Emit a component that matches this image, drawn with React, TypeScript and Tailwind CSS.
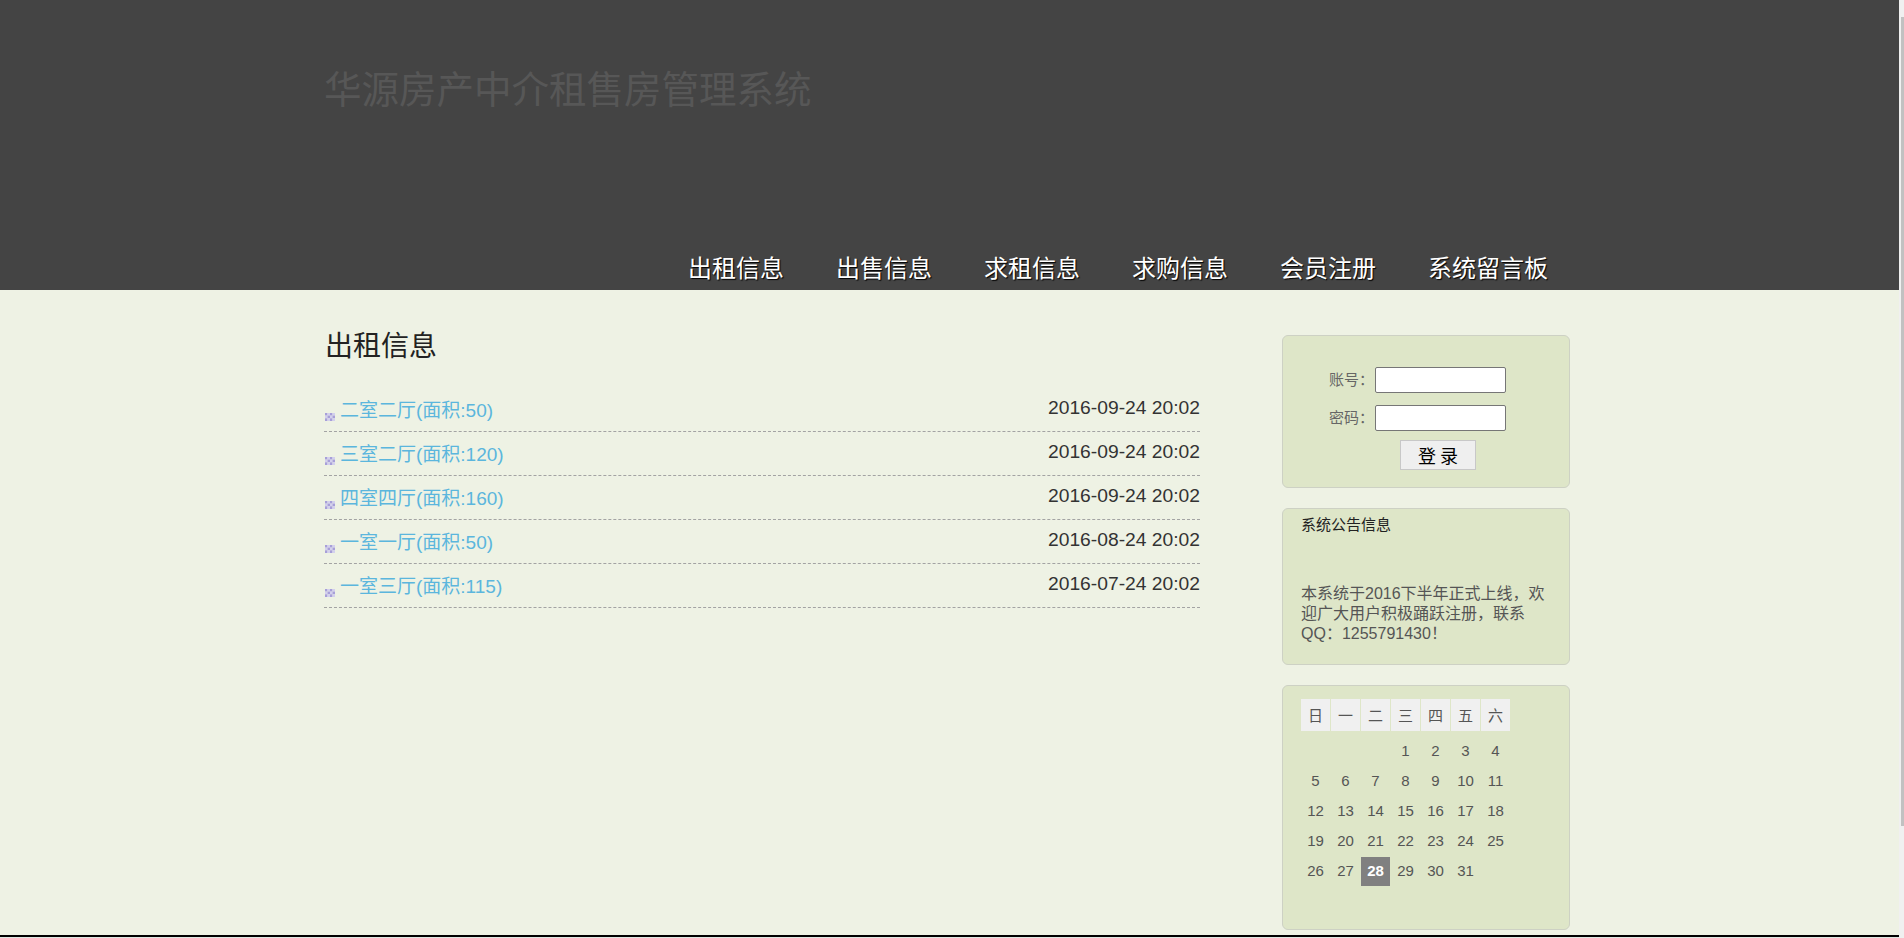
import React from "react";

const listItems = [
  { title: "二室二厅(面积:50)", date: "2016-09-24 20:02" },
  { title: "三室二厅(面积:120)", date: "2016-09-24 20:02" },
  { title: "四室四厅(面积:160)", date: "2016-09-24 20:02" },
  { title: "一室一厅(面积:50)", date: "2016-08-24 20:02" },
  { title: "一室三厅(面积:115)", date: "2016-07-24 20:02" },
];

const navItems = ["出租信息", "出售信息", "求租信息", "求购信息", "会员注册", "系统留言板"];

const weekDays = ["日", "一", "二", "三", "四", "五", "六"];

function Bullet() {
  const dark = "#a79fd9";
  const light = "#d3d0ee";
  return (
    <svg width="10" height="8" viewBox="0 0 10 8" className="mt-[25px] ml-[1px] shrink-0">
      <rect x="0" y="0" width="2.5" height="2.6" fill={dark} />
      <rect x="2.5" y="0" width="2.5" height="2.6" fill={light} />
      <rect x="5" y="0" width="2.5" height="2.6" fill={dark} />
      <rect x="7.5" y="0" width="2.5" height="2.6" fill={light} />
      <rect x="0" y="2.6" width="2.5" height="2.7" fill={light} />
      <rect x="2.5" y="2.6" width="2.5" height="2.7" fill={dark} />
      <rect x="5" y="2.6" width="2.5" height="2.7" fill={light} />
      <rect x="7.5" y="2.6" width="2.5" height="2.7" fill={dark} />
      <rect x="0" y="5.3" width="2.5" height="2.7" fill={dark} />
      <rect x="2.5" y="5.3" width="2.5" height="2.7" fill={light} />
      <rect x="5" y="5.3" width="2.5" height="2.7" fill={dark} />
      <rect x="7.5" y="5.3" width="2.5" height="2.7" fill={light} />
    </svg>
  );
}

function Calendar() {
  const cells: (number | null)[] = [null, null, null];
  for (let d = 1; d <= 31; d++) cells.push(d);
  return (
    <div>
      <div className="grid grid-cols-[repeat(7,29px)] gap-[1px]">
        {weekDays.map((w) => (
          <div
            key={w}
            className="h-[32px] bg-[#f0f0f0] flex items-center justify-center text-[15px] text-[#555] font-['Noto_Sans_CJK_SC',sans-serif]"
          >
            {w}
          </div>
        ))}
      </div>
      <div className="mt-[6px] grid grid-cols-[repeat(7,29px)] gap-[1px]">
        {cells.map((d, i) =>
          d === 28 ? (
            <div
              key={i}
              className="h-[29px] bg-[#808080] flex items-center justify-center text-[15px] font-bold text-white"
            >
              {d}
            </div>
          ) : (
            <div key={i} className="h-[29px] flex items-center justify-center text-[15px] text-[#555]">
              {d ?? ""}
            </div>
          )
        )}
      </div>
    </div>
  );
}

export default function App() {
  return (
    <div className="flex h-[938px] w-full overflow-hidden font-['Liberation_Sans','Noto_Sans_CJK_SC',sans-serif]">
      <div className="flex-1 min-w-0 flex flex-col">
        <header className="h-[290px] bg-[#444444]">
          <div className="w-[1251px] mx-auto h-full flex flex-col">
            <h1 className="pt-[68px] text-[37.5px] leading-none text-[#575757] font-['Noto_Sans_CJK_SC',sans-serif]">
              华源房产中介租售房管理系统
            </h1>
            <nav className="mt-auto pb-[11px] pr-[1px] flex justify-end">
              {navItems.map((n) => (
                <a
                  key={n}
                  className="px-[26px] text-[24px] leading-none text-white [text-shadow:1px_1px_1px_#000] font-['Noto_Sans_CJK_SC',sans-serif]"
                >
                  {n}
                </a>
              ))}
            </nav>
          </div>
        </header>

        <main className="h-[645px] bg-[#eef2e4]">
          <div className="w-[1251px] mx-auto flex">
            <section className="w-[876px] pt-[40px]">
              <h2 className="pl-[1px] text-[28px] leading-none text-[#222] font-['Noto_Sans_CJK_SC',sans-serif]">
                出租信息
              </h2>
              <ul className="mt-[30px]">
                {listItems.map((it) => (
                  <li
                    key={it.title}
                    className="h-[44px] border-b border-dashed border-[#a3a3a3] flex items-start justify-between"
                  >
                    <div className="flex items-start">
                      <Bullet />
                      <a className="ml-[5px] mt-[13px] text-[19px] leading-none text-[#5bb6dd]">{it.title}</a>
                    </div>
                    <span className="mt-[10px] text-[19.25px] leading-none text-[#333]">{it.date}</span>
                  </li>
                ))}
              </ul>
            </section>

            <aside className="ml-auto mr-[5px] w-[288px] pt-[45px] flex flex-col gap-[20px]">
              <div className="h-[153px] rounded-[6px] border border-[#cdd1c4] bg-[#dee6c8] pt-[31px] pl-[46px]">
                <div className="flex flex-col gap-[12px]">
                  <div className="flex items-center">
                    <span className="w-[46px] text-[15px] text-[#666]">账号：</span>
                    <input className="w-[131px] h-[26px] bg-white border border-[#767676] rounded-[2px]" />
                  </div>
                  <div className="flex items-center">
                    <span className="w-[46px] text-[15px] text-[#666]">密码：</span>
                    <input
                      type="password"
                      className="w-[131px] h-[26px] bg-white border border-[#767676] rounded-[2px]"
                    />
                  </div>
                </div>
                <button className="mt-[9px] ml-[71px] w-[76px] h-[30px] bg-[#efefef] border border-[#c8c8c8] text-[18px] text-black leading-none font-['Noto_Sans_CJK_SC',sans-serif]">
                  登&nbsp;录
                </button>
              </div>

              <div className="h-[157px] rounded-[6px] border border-[#cdd1c4] bg-[#dee6c8] pl-[18px] pt-[8px]">
                <div className="text-[15px] leading-none text-[#222]">系统公告信息</div>
                <p className="mt-[52px] w-[247px] text-[16px] leading-[20px] text-[#555]">
                  本系统于2016下半年正式上线，欢迎广大用户积极踊跃注册，联系QQ：1255791430！
                </p>
              </div>

              <div className="h-[245px] rounded-[6px] border border-[#cdd1c4] bg-[#dee6c8] pl-[18px] pt-[13px]">
                <Calendar />
              </div>
            </aside>
          </div>
        </main>

        <footer className="h-[3px] border-t-2 border-black bg-[#dfe6e0]" />
      </div>
      <div className="w-[5px] bg-[#f0f0f0] flex flex-col">
        <div className="ml-[2px] mt-[17px] h-[809px] w-[3px] bg-[#c1c1c1]" />
      </div>
    </div>
  );
}
